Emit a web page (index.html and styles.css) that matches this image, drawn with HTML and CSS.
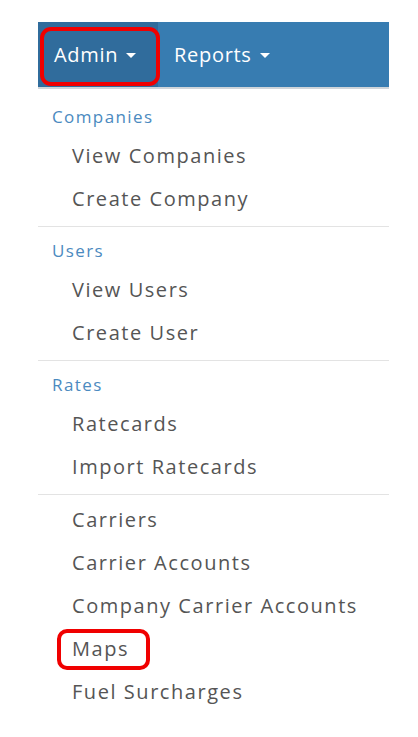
FILE: index.html
```html
<!DOCTYPE html>
<html>
<head>
<meta charset="utf-8">
<link rel="stylesheet" href="styles.css">
</head>
<body>
<div class="wrap">
  <nav class="navbar">
    <div class="nav-link active">Admin <span class="caret"></span></div>
    <div class="nav-link">Reports <span class="caret"></span></div>
  </nav>
  <ul class="menu">
    <li class="header">Companies</li>
    <li class="item">View Companies</li>
    <li class="item">Create Company</li>
    <li class="divider"></li>
    <li class="header">Users</li>
    <li class="item">View Users</li>
    <li class="item">Create User</li>
    <li class="divider"></li>
    <li class="header">Rates</li>
    <li class="item">Ratecards</li>
    <li class="item">Import Ratecards</li>
    <li class="divider last"></li>
    <li class="item">Carriers</li>
    <li class="item">Carrier Accounts</li>
    <li class="item">Company Carrier Accounts</li>
    <li class="item"><span class="mark">Maps</span></li>
    <li class="item">Fuel Surcharges</li>
  </ul>
</div>
</body>
</html>
```
FILE: styles.css
```css
html, body {
  margin: 0;
  padding: 0;
  background: #ffffff;
}
body {
  font-family: "Open Sans", "Noto Sans", sans-serif;
}
.wrap {
  width: 351px;
  margin-left: 38px;
  padding-top: 22px;
}
.navbar {
  display: flex;
  height: 65px;
  background: #377cb1;
  box-shadow: 0 2px 0 #cfd5da;
}
.nav-link {
  position: relative;
  display: flex;
  align-items: center;
  padding: 0 16px;
  color: #ffffff;
  font-size: 20px;
  letter-spacing: 0.7px;
}
.nav-link.active {
  width: 120px;
  box-sizing: border-box;
  background: #306c9c;
}
.nav-link.active::after {
  content: "";
  position: absolute;
  left: 2px;
  top: 5px;
  right: -2px;
  bottom: 1px;
  border: 4px solid #f00000;
  border-radius: 11px;
}
.caret {
  display: inline-block;
  width: 0;
  height: 0;
  margin-left: 8px;
  margin-top: 2px;
  border-left: 5px solid transparent;
  border-right: 5px solid transparent;
  border-top: 5px solid #ffffff;
}
.menu {
  list-style: none;
  margin: 0;
  padding: 13px 0 0 0;
}
.header {
  height: 34px;
  line-height: 34px;
  padding-left: 14px;
  font-size: 17px;
  letter-spacing: 1.4px;
  color: #4b8ac0;
}
.item {
  height: 43px;
  line-height: 43px;
  padding-left: 34px;
  font-size: 20px;
  letter-spacing: 1.55px;
  color: #555555;
}
.divider {
  height: 1px;
  margin: 6px 0 7px 0;
  background: #e3e3e3;
}
.divider.last {
  margin-bottom: 3px;
}
.mark {
  position: relative;
  display: inline-block;
  height: 43px;
}
.mark::after {
  content: "";
  position: absolute;
  left: -15px;
  right: -21px;
  top: 2px;
  bottom: 0px;
  border: 4px solid #f00000;
  border-radius: 10px;
}
```
